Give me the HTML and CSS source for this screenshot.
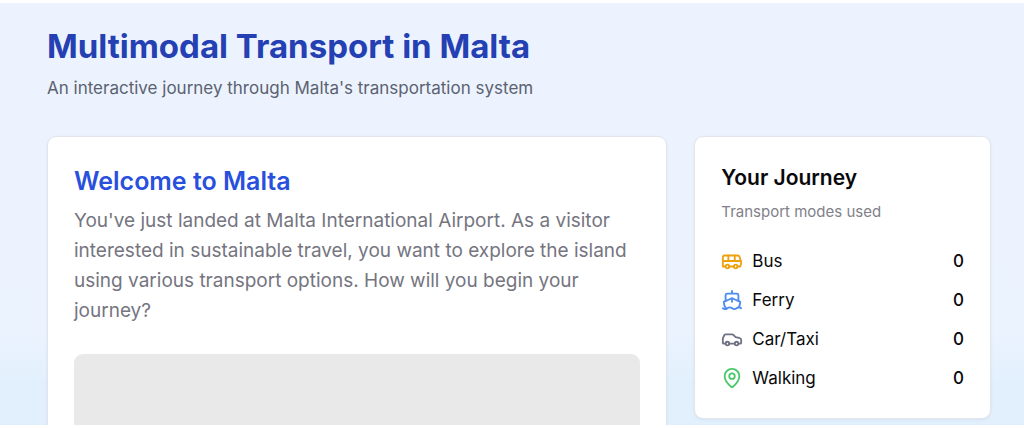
FILE: index.html
```html
<!DOCTYPE html>
<html lang="en">
<head>
  <meta charset="UTF-8" />
  <meta name="viewport" content="width=device-width, initial-scale=1" />
  <title>Multimodal Transport in Malta</title>
  <link rel="stylesheet" href="styles.css">
</head>
<body>
  <div class="page">
    <header class="page-header">
      <h1>Multimodal Transport in Malta</h1>
      <p>An interactive journey through Malta's transportation system</p>
    </header>

    <main class="layout">
      <section class="card story">
        <h2>Welcome to Malta</h2>
        <p class="story-text">You've just landed at Malta International Airport. As a visitor interested in sustainable travel, you want to explore the island using various transport options. How will you begin your journey?</p>
        <div class="scene"></div>
      </section>

      <aside class="card journey">
        <h3>Your Journey</h3>
        <p class="journey-note">Transport modes used</p>
        <ul class="modes">
          <li>
            <svg class="icon bus" viewBox="0 0 24 24">
              <path d="M8 6v6M15 6v6M2 12h19.6" />
              <path d="M18 18h3s.5-1.7.8-2.8c.1-.4.2-.8.2-1.2 0-.4-.1-.8-.2-1.2l-1.4-5C20.1 6.8 19.1 6 18 6H4a2 2 0 0 0-2 2v10h3" />
              <circle cx="7" cy="18" r="2" />
              <path d="M9 18h5" />
              <circle cx="16" cy="18" r="2" />
            </svg>
            <span>Bus</span>
            <span class="count">0</span>
          </li>
          <li>
            <svg class="icon ferry" viewBox="0 0 24 24">
              <path d="M2 21c.6.5 1.2 1 2.5 1 2.5 0 2.5-2 5-2 1.3 0 1.9.5 2.5 1s1.2 1 2.5 1c2.5 0 2.5-2 5-2 1.3 0 1.9.5 2.5 1" />
              <path d="M19.38 20A11.6 11.6 0 0 0 21 14l-8.188-3.639a2 2 0 0 0-1.624 0L3 14a11.6 11.6 0 0 0 2.81 7.76" />
              <path d="M19 13V7a2 2 0 0 0-2-2H7a2 2 0 0 0-2 2v6M12 10v4M12 2v3" />
            </svg>
            <span>Ferry</span>
            <span class="count">0</span>
          </li>
          <li>
            <svg class="icon car" viewBox="0 0 24 24">
              <path d="M19 17h2c.6 0 1-.4 1-1v-3c0-.9-.7-1.7-1.5-1.9C18.7 10.6 16 10 16 10s-1.3-1.4-2.2-2.3c-.5-.4-1.1-.7-1.8-.7H5c-.6 0-1.1.4-1.4.9l-1.4 2.9A3.7 3.7 0 0 0 2 12v4c0 .6.4 1 1 1h2" />
              <circle cx="7" cy="17" r="2" />
              <path d="M9 17h6" />
              <circle cx="17" cy="17" r="2" />
            </svg>
            <span>Car/Taxi</span>
            <span class="count">0</span>
          </li>
          <li>
            <svg class="icon walking" viewBox="0 0 24 24">
              <path d="M20 10c0 5-5.5 10.2-7.4 11.8a1 1 0 0 1-1.2 0C9.5 20.2 4 15 4 10a8 8 0 0 1 16 0" />
              <circle cx="12" cy="10" r="3" />
            </svg>
            <span>Walking</span>
            <span class="count">0</span>
          </li>
        </ul>
      </aside>
    </main>
  </div>
</body>
</html>
```

FILE: styles.css
```css
* {
  box-sizing: border-box;
}
html {
  height: 100%;
  background: #fff;
}
body {
  margin: 0;
  height: 100%;
  padding: 3px 0;
  font-family: Inter, "Liberation Sans", sans-serif;
  color: #09090b;
}
h1, h2, h3, p, ul {
  margin: 0;
  padding: 0;
}
.page {
  height: 100%;
  overflow: hidden;
  padding: 23px 33px 0 47px;
  background: linear-gradient(#ecf3fe 0%, #ebf3fe 78%, #e2f0fd 90%);
}
.page-header {
  margin-bottom: 34px;
}
.page-header h1 {
  font-size: 33px;
  line-height: 40px;
  font-weight: 700;
  color: #2440b3;
}
.page-header p {
  margin-top: 8px;
  font-size: 17px;
  line-height: 28px;
  color: #5b6270;
}
.layout {
  display: grid;
  grid-template-columns: repeat(3, 1fr);
  gap: 27px;
  align-items: start;
}
.card {
  padding: 26px;
  background: #fff;
  border: 1px solid #e2e5ec;
  border-radius: 9px;
  box-shadow: 0 1px 3px rgba(0, 0, 0, 0.06);
}
.story {
  grid-column: span 2;
}
.story h2 {
  font-size: 25px;
  line-height: 36px;
  font-weight: 600;
  color: #2850dc;
}
.story-text {
  margin-top: 7px;
  font-size: 19px;
  line-height: 30px;
  color: #75757f;
}
.scene {
  height: 280px;
  margin-top: 28px;
  background: #e9e9e9;
  border-radius: 9px;
}
.journey h3 {
  font-size: 21px;
  line-height: 30px;
  font-weight: 600;
}
.journey-note {
  margin-top: 8px;
  font-size: 15px;
  line-height: 22px;
  color: #81818a;
}
.modes {
  margin-top: 24px;
  list-style: none;
  display: grid;
  gap: 11px;
}
.modes li {
  display: flex;
  align-items: center;
  gap: 9px;
  font-size: 17px;
  line-height: 28px;
}
.count {
  margin-left: auto;
  font-weight: 500;
}
.icon {
  width: 22px;
  height: 22px;
  fill: none;
  stroke: currentColor;
  stroke-width: 2;
  stroke-linecap: round;
  stroke-linejoin: round;
}
.bus {
  color: #eea10e;
}
.ferry {
  color: #4d8bf0;
}
.car {
  color: #717385;
}
.walking {
  color: #4bc969;
}
```
